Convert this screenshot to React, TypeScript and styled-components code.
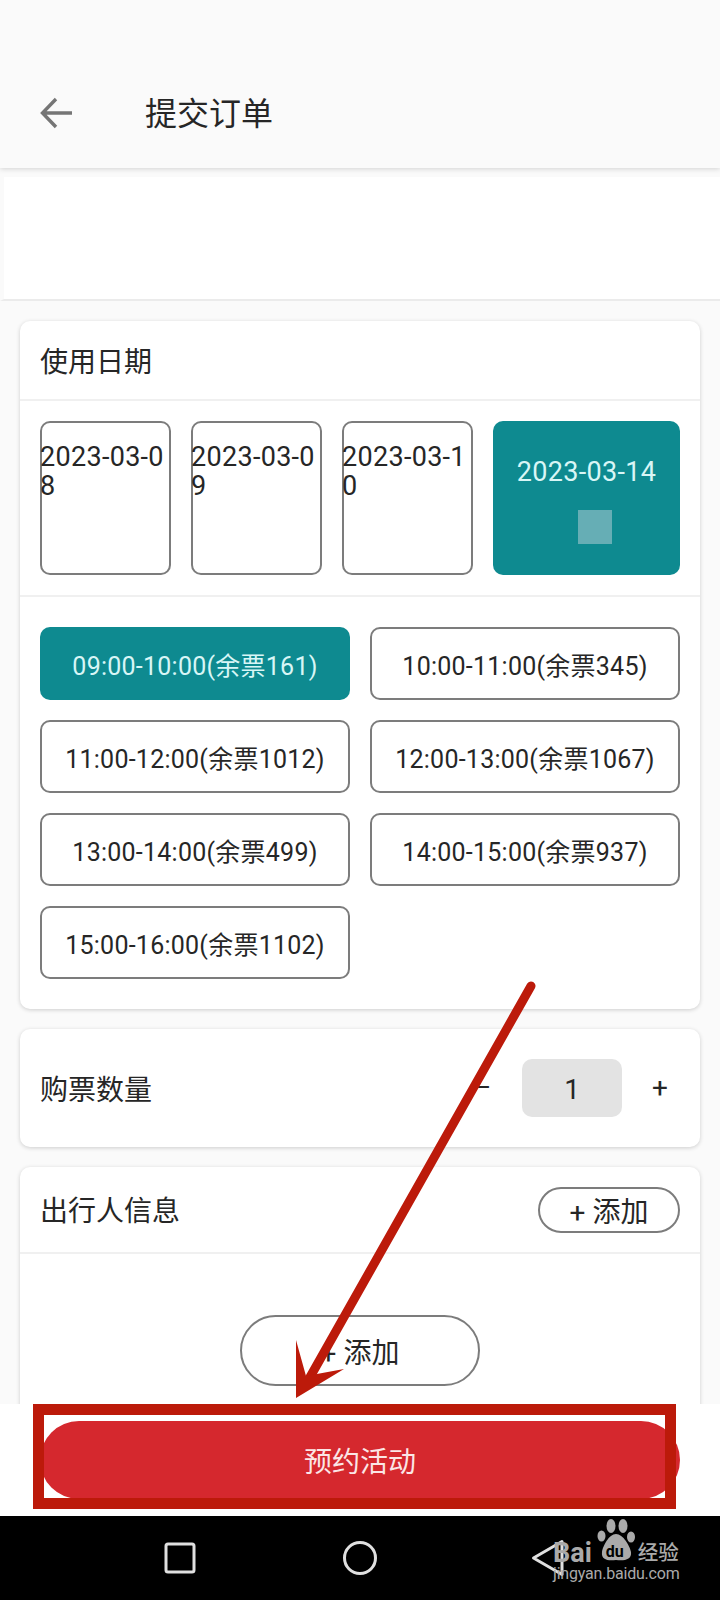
import styled, { createGlobalStyle } from 'styled-components';

const GlobalStyle = createGlobalStyle`
  html, body {
    margin: 0;
    padding: 0;
    background: #fafafa;
  }
  * {
    box-sizing: border-box;
  }
`;

const Page = styled.div`
  position: relative;
  width: 720px;
  height: 1600px;
  display: flex;
  flex-direction: column;
  overflow: hidden;
  background: #fafafa;
  color: #262626;
  font-family: Roboto, 'Noto Sans CJK SC', sans-serif;
`;

const Header = styled.header`
  flex: none;
  height: 168px;
  padding: 58px 0 0 40px;
  display: flex;
  align-items: center;
  gap: 73px;
  background: #fafafa;
  box-shadow: 0 1px 5px rgba(0, 0, 0, 0.16);
`;

const HeaderTitle = styled.h1`
  margin: 2px 0 0;
  font-size: 32px;
  font-weight: 400;
  line-height: 40px;
`;

const Content = styled.main`
  flex: 1;
  min-height: 0;
  overflow: hidden;
  padding-top: 9px;
`;

const BlankStrip = styled.div`
  height: 124px;
  margin-bottom: 20px;
  background: #fff;
  border-bottom: 2px solid #ebebeb;
  border-left: 4px solid #fafafa;
`;

const Card = styled.section`
  margin: 0 20px 20px;
  background: #fff;
  border-radius: 10px;
  box-shadow: 0 1px 4px rgba(0, 0, 0, 0.18);
`;

const CardHeader = styled.div<{ $tall?: boolean }>`
  height: ${(props) => (props.$tall ? '87px' : '80px')};
  padding: 0 20px;
  display: flex;
  align-items: center;
  justify-content: space-between;
  border-bottom: 2px solid #f0f0f0;
`;

const CardTitle = styled.h2`
  margin: 5px 0 0;
  font-size: 28px;
  font-weight: 400;
  line-height: 36px;
`;

const DateRow = styled.div`
  display: grid;
  grid-template-columns: 131px 131px 131px 187px;
  justify-content: space-between;
  padding: 20px;
  border-bottom: 2px solid #f0f0f0;
`;

const DateBox = styled.div<{ $active?: boolean }>`
  height: 154px;
  display: flex;
  flex-direction: column;
  align-items: ${(props) => (props.$active ? 'center' : 'flex-start')};
  gap: 23px;
  padding-top: ${(props) => (props.$active ? '37px' : '22px')};
  box-shadow: ${(props) => (props.$active ? 'none' : 'inset 0 0 0 2px #7c7c7c')};
  border-radius: 10px;
  background: ${(props) => (props.$active ? '#0e8a90' : '#fff')};
  color: ${(props) => (props.$active ? '#d8f6f6' : '#262626')};
  font-size: 27px;
  letter-spacing: 0.3px;
  line-height: 29px;
  word-break: break-all;
`;

const DateMark = styled.div`
  width: 34px;
  height: 34px;
  margin-left: 16px;
  background: #66aeb5;
`;

const SlotGrid = styled.div`
  display: grid;
  grid-template-columns: 1fr 1fr;
  gap: 20px;
  padding: 30px 20px;
`;

const Slot = styled.div<{ $active?: boolean }>`
  height: 73px;
  display: flex;
  align-items: center;
  justify-content: center;
  border: ${(props) => (props.$active ? 'none' : '2px solid #7c7c7c')};
  border-radius: 10px;
  background: ${(props) => (props.$active ? '#0e8a90' : '#fff')};
  color: ${(props) => (props.$active ? '#d8f6f6' : '#262626')};
  font-size: 25px;
  letter-spacing: 0.25px;
  white-space: nowrap;
`;

const QuantityRow = styled.div`
  height: 118px;
  padding: 0 20px;
  display: flex;
  align-items: center;
  justify-content: space-between;
`;

const Stepper = styled.div`
  display: flex;
  align-items: center;
  font-size: 28px;
`;

const StepButton = styled.span<{ $narrow?: boolean }>`
  width: ${(props) => (props.$narrow ? '40px' : '58px')};
  text-align: center;
  line-height: 58px;
`;

const StepValue = styled.div`
  width: 100px;
  height: 58px;
  display: flex;
  align-items: center;
  justify-content: center;
  margin: 0 18px 0 10px;
  padding-top: 3px;
  border-radius: 10px;
  background: #e3e3e3;
`;

const AddButton = styled.div<{ $large?: boolean }>`
  width: ${(props) => (props.$large ? '240px' : '142px')};
  height: ${(props) => (props.$large ? '71px' : '46px')};
  display: flex;
  align-items: center;
  justify-content: center;
  border: 2px solid #7c7c7c;
  border-radius: 36px;
  background: #fff;
  font-size: 28px;
`;

const TravellerBody = styled.div`
  display: flex;
  justify-content: center;
  padding: 61px 0 40px;
`;

const Footer = styled.footer`
  flex: none;
  height: 112px;
  padding: 17px 40px 0;
  background: #fff;
`;

const SubmitButton = styled.div`
  height: 78px;
  display: flex;
  align-items: center;
  justify-content: center;
  border-radius: 39px;
  background: #d5282e;
  color: #fbe6e6;
  font-size: 28px;
`;

const NavBar = styled.nav`
  flex: none;
  height: 84px;
  padding-left: 90px;
  display: grid;
  grid-template-columns: repeat(3, 180px);
  align-items: center;
  justify-items: center;
  background: #000;
`;

const BackIcon = styled.svg`
  margin-left: 16px;
`;

const Watermark = styled.div`
  position: absolute;
  left: 553px;
  bottom: 14px;
  width: 130px;
  color: #aaa;
`;

const WatermarkTop = styled.div`
  display: flex;
  align-items: flex-end;
  height: 52px;
  font-weight: 700;
  font-size: 27px;
  line-height: 18px;
`;

const PawSlot = styled.div`
  position: relative;
  width: 38px;
  height: 52px;
  margin-left: 5px;
  flex: none;
`;

const PawText = styled.span`
  position: absolute;
  left: 9px;
  bottom: 1px;
  color: #000;
  font-size: 16px;
  line-height: 18px;
`;

const WatermarkCn = styled.span`
  margin-left: 3px;
  font-size: 20.5px;
  font-weight: 500;
  white-space: nowrap;
`;

const WatermarkUrl = styled.div`
  font-size: 16px;
  letter-spacing: -0.2px;
  line-height: 24px;
  white-space: nowrap;
`;

const Annotation = styled.svg`
  position: absolute;
  left: 0;
  top: 0;
  pointer-events: none;
`;

const dates = ['2023-03-08', '2023-03-09', '2023-03-10'];
const slots = [
  '09:00-10:00(余票161)',
  '10:00-11:00(余票345)',
  '11:00-12:00(余票1012)',
  '12:00-13:00(余票1067)',
  '13:00-14:00(余票499)',
  '14:00-15:00(余票937)',
  '15:00-16:00(余票1102)',
];

export default function App() {
  return (
    <Page>
      <GlobalStyle />
      <Header>
        <svg width="32" height="32" viewBox="0 0 32 32" fill="none" stroke="#757575" strokeWidth="3.4">
          <path d="M32 16H3M16 2L2.5 16L16 30" />
        </svg>
        <HeaderTitle>提交订单</HeaderTitle>
      </Header>
      <Content>
        <BlankStrip />
        <Card>
          <CardHeader>
            <CardTitle>使用日期</CardTitle>
          </CardHeader>
          <DateRow>
            {dates.map((date) => (
              <DateBox key={date}>{date}</DateBox>
            ))}
            <DateBox $active>
              2023-03-14
              <DateMark />
            </DateBox>
          </DateRow>
          <SlotGrid>
            {slots.map((slot, idx) => (
              <Slot key={slot} $active={idx === 0}>
                {slot}
              </Slot>
            ))}
          </SlotGrid>
        </Card>
        <Card>
          <QuantityRow>
            <CardTitle>购票数量</CardTitle>
            <Stepper>
              <StepButton>−</StepButton>
              <StepValue>1</StepValue>
              <StepButton $narrow>+</StepButton>
            </Stepper>
          </QuantityRow>
        </Card>
        <Card>
          <CardHeader $tall>
            <CardTitle>出行人信息</CardTitle>
            <AddButton>+ 添加</AddButton>
          </CardHeader>
          <TravellerBody>
            <AddButton $large>+ 添加</AddButton>
          </TravellerBody>
        </Card>
      </Content>
      <Footer>
        <SubmitButton>预约活动</SubmitButton>
      </Footer>
      <NavBar>
        <svg width="34" height="34" viewBox="0 0 34 34" fill="none" stroke="#e0e0e0" strokeWidth="3">
          <rect x="3" y="3" width="28" height="28" rx="2" />
        </svg>
        <svg width="36" height="36" viewBox="0 0 36 36" fill="none" stroke="#e0e0e0" strokeWidth="3">
          <circle cx="18" cy="18" r="15.5" />
        </svg>
        <BackIcon width="34" height="38" viewBox="0 0 34 38" fill="none" stroke="#e0e0e0" strokeWidth="3" strokeLinejoin="round">
          <path d="M31 2.5L2.5 19L31 35.5Z" />
        </BackIcon>
      </NavBar>
      <Watermark>
        <WatermarkTop>
          Bai
          <PawSlot>
            <svg width="38" height="52" viewBox="0 0 38 52" fill="#aaa">
              <ellipse cx="14" cy="16" rx="4.5" ry="7" />
              <ellipse cx="26" cy="16" rx="4.5" ry="7" />
              <ellipse cx="4.5" cy="26" rx="4" ry="5.5" />
              <ellipse cx="34" cy="27" rx="4" ry="5.5" />
              <path d="M19 24C26 24 33 36 34 42C35 50 27 51 19 50C11 51 4 50 5 42C6 36 12 24 19 24Z" />
            </svg>
            <PawText>du</PawText>
          </PawSlot>
          <WatermarkCn>经验</WatermarkCn>
        </WatermarkTop>
        <WatermarkUrl>jingyan.baidu.com</WatermarkUrl>
      </Watermark>
      <Annotation width="720" height="1600" viewBox="0 0 720 1600">
        <rect x="38.5" y="1409.5" width="632" height="94" fill="none" stroke="#bc1a0a" strokeWidth="11" />
        <line x1="531" y1="986" x2="305" y2="1386" stroke="#bc1a0a" strokeWidth="9" strokeLinecap="round" />
        <polygon points="296,1340 306,1376 344,1369 296,1398" fill="#bc1a0a" />
      </Annotation>
    </Page>
  );
}
